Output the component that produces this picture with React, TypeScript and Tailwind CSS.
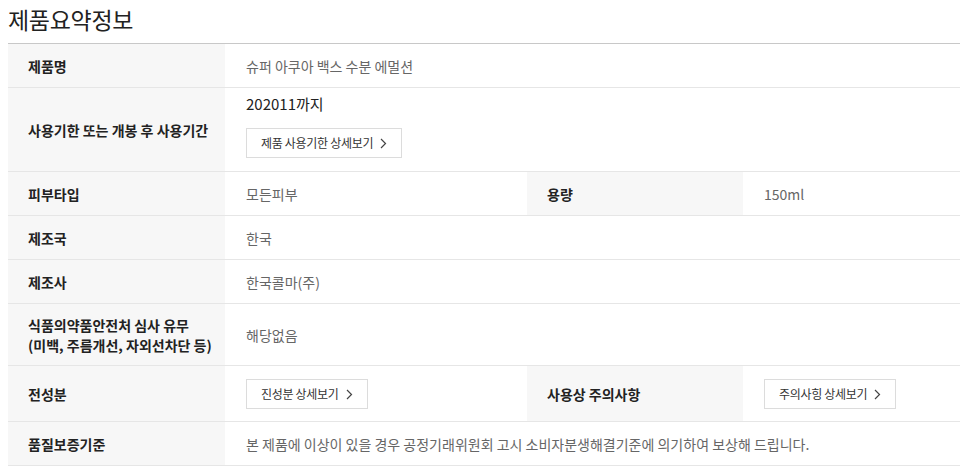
import React from "react";

const font = { fontFamily: '"Noto Sans CJK KR", "Noto Sans", sans-serif' };

const Chevron = () => (
  <svg width="7" height="11" viewBox="0 0 7 11" className="ml-[7px] mt-[1px]">
    <path d="M1 1l4.5 4.5L1 10" fill="none" stroke="#444" strokeWidth="1.2" />
  </svg>
);

const DetailButton = ({ label }: { label: string }) => (
  <button className="flex items-center h-[30px] px-[14px] border border-[#dcdcdc] bg-white text-[12px] text-[#333] tracking-[-0.3px]">
    {label}
    <Chevron />
  </button>
);

const Label = ({ children, w = "w-[217px]" }: { children: React.ReactNode; w?: string }) => (
  <div className={`${w} shrink-0 flex items-center pl-[20px] bg-[#f7f7f7] text-[14px] font-bold text-[#222] leading-[20px]`}>
    {children}
  </div>
);

const Value = ({ children, w = "flex-1" }: { children: React.ReactNode; w?: string }) => (
  <div className={`${w} flex items-center pl-[21px] text-[14px] text-[#666] leading-[20px]`}>
    {children}
  </div>
);

export default function App() {
  return (
    <div className="w-[960px] h-[466px] overflow-hidden bg-white" style={font}>
      <h2 className="h-[43px] pl-[8px] text-[23px] leading-[38px] text-[#222] font-normal tracking-[-0.3px]">
        제품요약정보
      </h2>
      <div className="ml-[8px] w-[1050px] border-t border-[#c8c8c8]">
        {/* 제품명 */}
        <div className="flex h-[44px] border-b border-[#e6e6e6]">
          <Label>제품명</Label>
          <Value>슈퍼 아쿠아 백스 수분 에멀션</Value>
        </div>

        {/* 사용기한 */}
        <div className="flex h-[84px] border-b border-[#e6e6e6]">
          <Label>사용기한 또는 개봉 후 사용기간</Label>
          <div className="flex-1 flex flex-col items-start pl-[21px] pt-[6px]">
            <span className="text-[15px] leading-[20px] text-[#222]">202011까지</span>
            <div className="mt-[14px]">
              <DetailButton label="제품 사용기한 상세보기" />
            </div>
          </div>
        </div>

        {/* 피부타입 / 용량 */}
        <div className="flex h-[44px] border-b border-[#e6e6e6]">
          <Label>피부타입</Label>
          <Value w="w-[302px]">모든피부</Value>
          <Label w="w-[216px]">용량</Label>
          <Value>150ml</Value>
        </div>

        <div className="flex h-[44px] border-b border-[#e6e6e6]">
          <Label>제조국</Label>
          <Value>한국</Value>
        </div>

        <div className="flex h-[44px] border-b border-[#e6e6e6]">
          <Label>제조사</Label>
          <Value>한국콜마(주)</Value>
        </div>

        <div className="flex h-[62px] border-b border-[#e6e6e6]">
          <Label>
            <span>
              식품의약품안전처 심사 유무
              <br />
              (미백, 주름개선, 자외선차단 등)
            </span>
          </Label>
          <Value>해당없음</Value>
        </div>

        {/* 전성분 / 주의사항 */}
        <div className="flex h-[56px] border-b border-[#e6e6e6]">
          <Label>전성분</Label>
          <Value w="w-[302px]">
            <DetailButton label="진성분 상세보기" />
          </Value>
          <Label w="w-[216px]">사용상 주의사항</Label>
          <Value>
            <DetailButton label="주의사힝 상세보기" />
          </Value>
        </div>

        <div className="flex h-[44px] border-b border-[#e6e6e6]">
          <Label>품질보증기준</Label>
          <Value>본 제품에 이상이 있을 경우 공정기래위원회 고시 소비자분생해결기준에 의기하여 보상해 드립니다.</Value>
        </div>
      </div>
    </div>
  );
}
